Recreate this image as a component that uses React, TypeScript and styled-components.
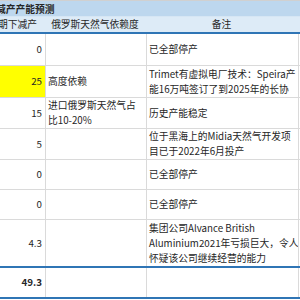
import React from "react";
import styled, { createGlobalStyle } from "styled-components";

const Global = createGlobalStyle`
  html, body { margin: 0; padding: 0; background: #ffffff; }
  body {
    width: 300px;
    height: 300px;
    overflow: hidden;
    font-family: "Noto Sans CJK SC", "Noto Sans", sans-serif;
    font-size: 9.75px;
    color: #262626;
  }
`;

const Sheet = styled.div`
  width: 300px;
  display: flex;
  flex-direction: column;
`;

const TitleBar = styled.div`
  height: 15px;
  border-top: 1px solid #d0d0d0;
  background: #bdd7ee;
  display: flex;
  align-items: center;
  overflow: hidden;
  white-space: nowrap;
  font-weight: bold;
  border-bottom: 1px solid #d6e6f4;
`;

const TitleText = styled.span`
  margin-left: -4px;
`;

const Row = styled.div<{ $h: number; $line?: string; $lineW?: number }>`
  display: grid;
  grid-template-columns: 46px 101px 152px;
  height: ${(p) => p.$h}px;
  border-bottom: ${(p) => p.$lineW ?? 1}px solid ${(p) => p.$line ?? "#dadada"};
  box-sizing: content-box;
`;

const HeaderRow = styled(Row)`
  background: #ddebf7;
  font-weight: bold;
`;

const Cell = styled.div<{ $align?: "left" | "right" | "center"; $bg?: string; $noRule?: boolean; $bold?: boolean }>`
  display: flex;
  flex-direction: column;
  justify-content: center;
  align-items: ${(p) =>
    p.$align === "right" ? "flex-end" : p.$align === "center" ? "center" : "flex-start"};
  padding: 0 ${(p) => (p.$align === "right" ? "3px" : "2px")} 0 ${(p) => (p.$align === "left" ? "2px" : "0")};
  background: ${(p) => p.$bg ?? "transparent"};
  border-right: 1px solid ${(p) => (p.$noRule ? "transparent" : "#dadada")};
  overflow: hidden;
  white-space: nowrap;
  line-height: 15px;
  font-weight: ${(p) => (p.$bold ? "bold" : "normal")};
`;

const HeadCut = styled.span`
  margin-right: 5px;
`;

const Line = styled.span`
  display: block;
  white-space: nowrap;
`;

type DataRow = {
  h: number;
  value: string;
  yellow?: boolean;
  dep?: string[];
  note: string[];
  line?: string;
  lineW?: number;
};

const rows: DataRow[] = [
  { h: 31, value: "0", note: ["已全部停产"] },
  { h: 31, value: "25", yellow: true, dep: ["高度依赖"], note: ["Trimet有虚拟电厂技术：Speira产", "能16万吨签订了到2025年的长协"] },
  { h: 30, value: "15", dep: ["进口俄罗斯天然气占", "比10-20%"], note: ["历史产能稳定"] },
  { h: 30, value: "5", note: ["位于黑海上的Midia天然气开发项", "目已于2022年6月投产"] },
  { h: 29, value: "0", note: ["已全部停产"] },
  { h: 29, value: "0", note: ["已全部停产"] },
  {
    h: 46,
    value: "4.3",
    note: ["集团公司Alvance British", "Aluminium2021年亏损巨大，令人", "怀疑该公司继续经营的能力"],
    line: "#2f75b5",
    lineW: 2,
  },
];

export default function App() {
  return (
    <>
      <Global />
      <Sheet>
        <TitleBar>
          <TitleText>减产产能预测</TitleText>
        </TitleBar>
        <HeaderRow $h={15} $line="#2f75b5" $lineW={2}>
          <Cell $align="right" $noRule>
            <HeadCut>预期下减产</HeadCut>
          </Cell>
          <Cell $align="center" $noRule>俄罗斯天然气依赖度</Cell>
          <Cell $align="center" $noRule>备注</Cell>
        </HeaderRow>
        {rows.map((r, i) => (
          <Row key={i} $h={r.h} $line={r.line} $lineW={r.lineW}>
            <Cell $align="right" $bg={r.yellow ? "#ffff00" : undefined}>
              {r.value}
            </Cell>
            <Cell $align="left">
              {(r.dep ?? []).map((t) => (
                <Line key={t}>{t}</Line>
              ))}
            </Cell>
            <Cell $align="left">
              {r.note.map((t) => (
                <Line key={t}>{t}</Line>
              ))}
            </Cell>
          </Row>
        ))}
        <Row $h={29} $line="#2f75b5" $lineW={2}>
          <Cell $align="right" $bold>49.3</Cell>
          <Cell $align="left" />
          <Cell $align="left" />
        </Row>
      </Sheet>
    </>
  );
}
